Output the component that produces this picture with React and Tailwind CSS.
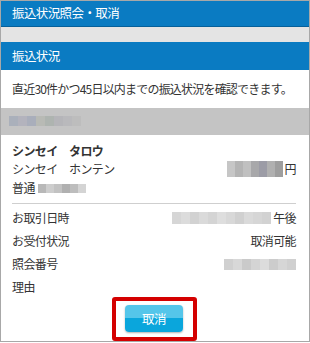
const font = { fontFamily: '"Noto Sans CJK JP", "Noto Sans", sans-serif' };

function Mosaic({ cells, w, h }) {
  return (
    <div className="flex">
      {cells.map((c, i) => (
        <div key={i} style={{ width: w, height: h, backgroundColor: c }} />
      ))}
    </div>
  );
}

export default function App() {
  return (
    <div className="w-[310px] h-[343px] bg-white" style={font}>
      <div className="w-[310px] h-[342px] border border-[#a8a8a8] flex flex-col text-[12px] tracking-[-0.6px] text-[#333]">
        <div className="h-[27px] bg-[#0a7bc2] border-b border-[#06609a] text-white flex items-center pl-[11px] text-[12.5px]">
          振込状況照会・取消
        </div>
        <div className="h-[15px] bg-[#e4e4e4]" />
        <div className="h-[29px] bg-[#0a7bc2] text-white flex items-center pl-[11px] text-[12.5px]">振込状況</div>
        <div className="h-[38px] flex items-center pl-[11px] whitespace-nowrap tracking-[-0.8px]">
          直近30件かつ45日以内までの振込状況を確認できます。
        </div>
        <div className="h-[28px] bg-[#c4c4c4] flex items-center pl-[8px]">
          <Mosaic w={9} h={10} cells={['#aab0bb', '#b3b3bd', '#a9aebb', '#b8bab5', '#aeb4b0', '#b5b5b9', '#b9b9bc', '#bdbdbd']} />
        </div>
        <div className="flex-1 flex flex-col pl-[11px] pr-[13px] pt-[6px]">
          <div className="font-bold h-[19px] leading-[19px]">シンセイ　タロウ</div>
          <div className="flex items-center justify-between h-[19px]">
            <span>シンセイ　ホンテン</span>
            <span className="flex items-center gap-[2px]">
              <Mosaic w={8} h={16} cells={['#c6c6c6', '#b4b4b4', '#c0c0c0', '#a8a8aa', '#9c9ca6', '#b0b0b0', '#9e9e9e']} />
              円
            </span>
          </div>
          <div className="flex items-center h-[19px] gap-[3px]">
            <span>普通</span>
            <Mosaic w={8} h={9} cells={['#b8b8b8', '#cdcdcd', '#c2c2c2', '#b0b0b0', '#bdbdbd', '#d4d4d4']} />
          </div>
          <div className="border-b border-[#cfcfcf] mt-[5px] mb-[4px]" />
          <div className="flex items-center justify-between h-[20px]">
            <span>お取引日時</span>
            <span className="flex items-center gap-[2px]">
              <Mosaic w={9} h={12} cells={['#d6d6d6', '#dcdcdc', '#d2d2d2', '#dadada', '#d4d4d4', '#dedede', '#d8d8d8', '#d0d0d0', '#dadada', '#d6d6d6', '#d2d2d2']} />
              午後
            </span>
          </div>
          <div className="flex items-center justify-between h-[24px] mt-[1px]">
            <span>お受付状況</span>
            <span>取消可能</span>
          </div>
          <div className="flex items-center justify-between h-[23px]">
            <span>照会番号</span>
            <Mosaic w={9} h={11} cells={['#d0d0d0', '#d8d8d8', '#cacaca', '#d4d4d4', '#dcdcdc', '#cccccc', '#d6d6d6', '#d0d0d0']} />
          </div>
          <div className="flex items-center h-[23px]">理由</div>
          <div className="flex justify-center">
            <div className="w-[85px] h-[44px] border-[4px] border-[#d40000] rounded-[3px] flex items-center justify-center -mt-[2px]">
              <div className="w-[58px] h-[27px] rounded-[4px] bg-gradient-to-b from-[#55c6ea] from-50% to-[#0aa6dc] to-50% text-white text-[12.5px] flex items-center justify-center shadow-[0_1px_2px_rgba(0,0,0,0.3)]">
                取消
              </div>
            </div>
          </div>
        </div>
      </div>
    </div>
  );
}
